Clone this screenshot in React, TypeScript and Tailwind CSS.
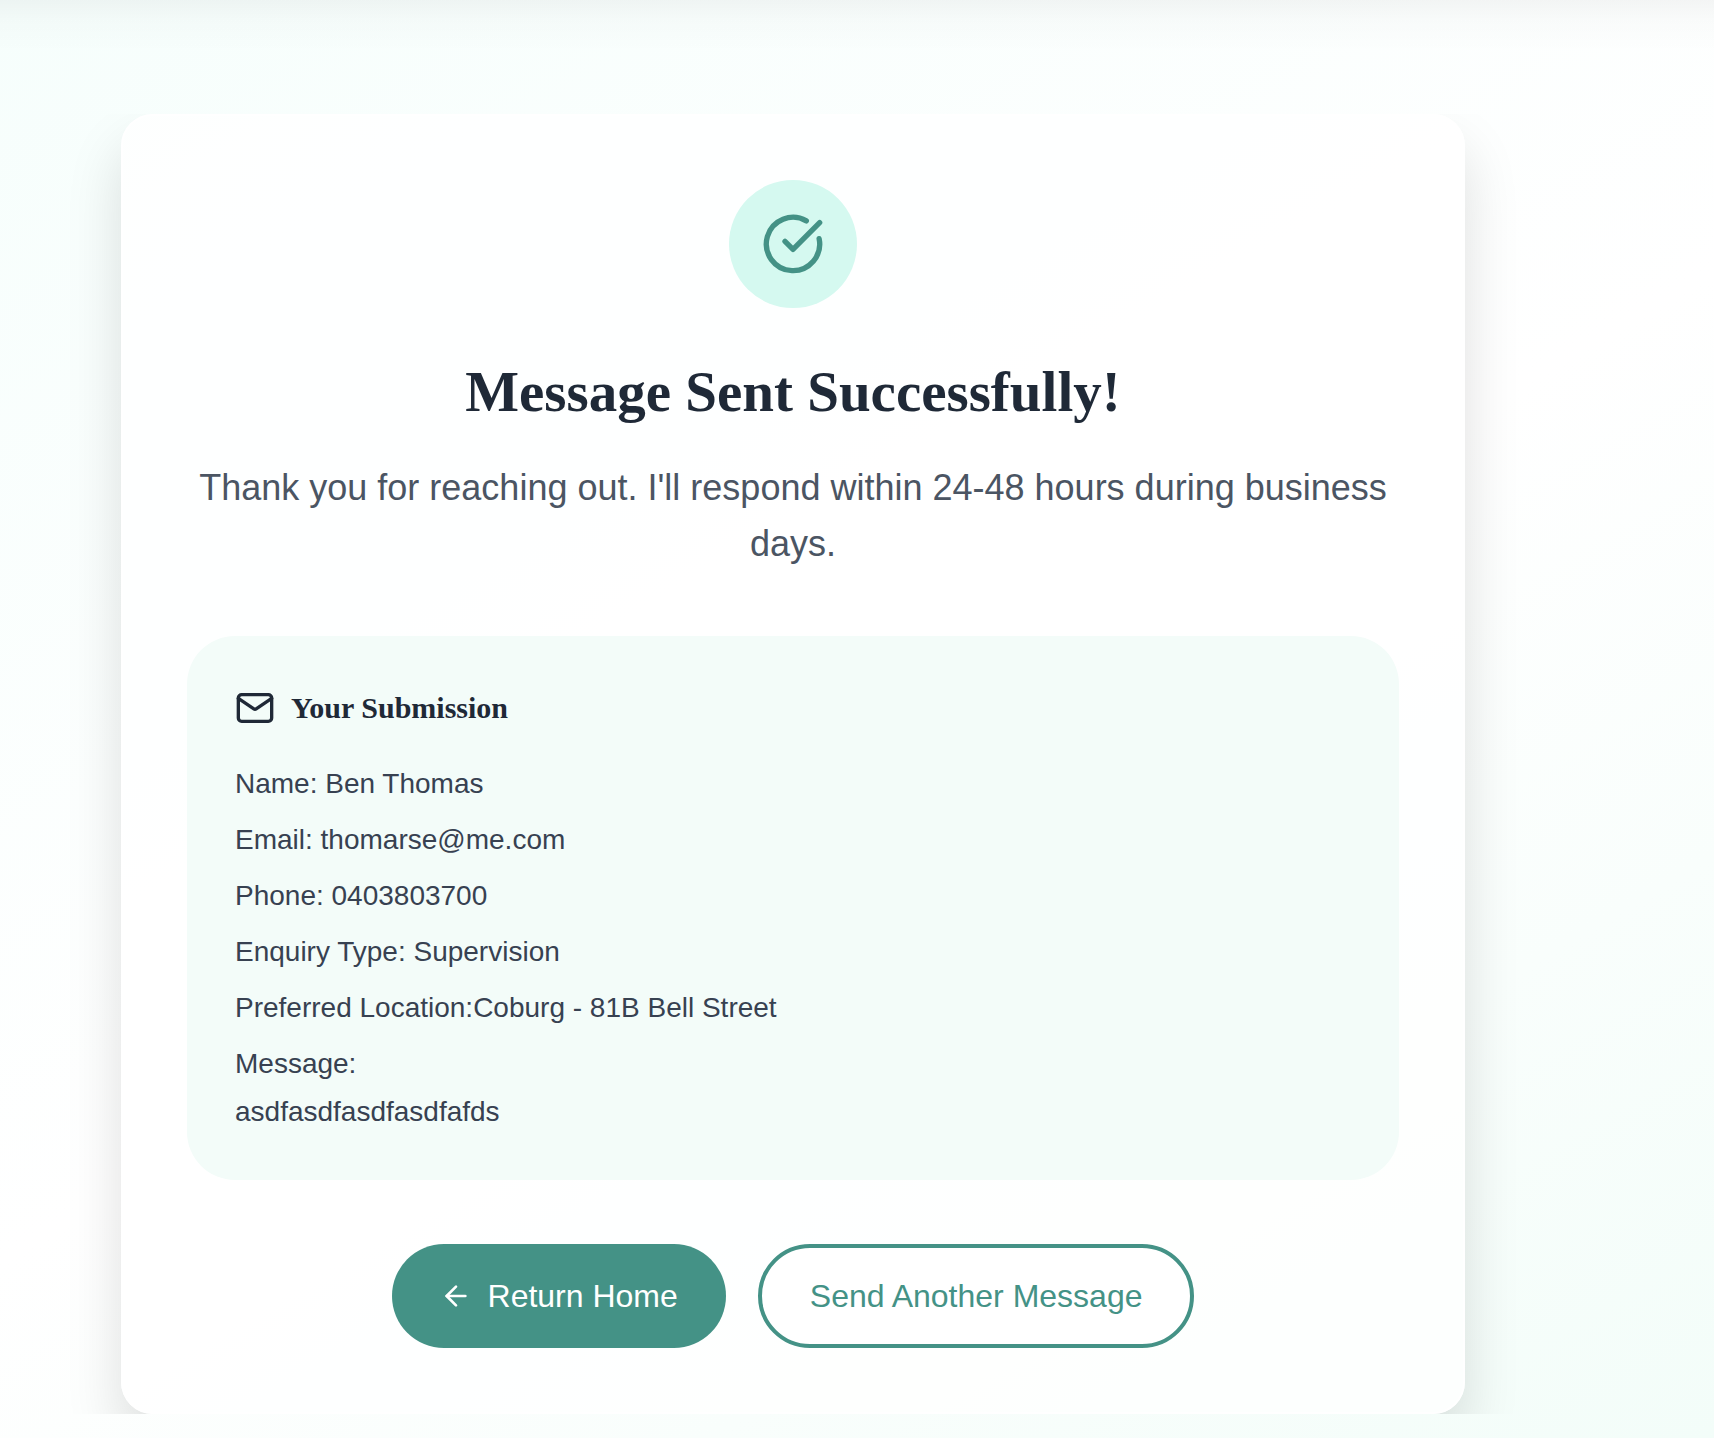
import { ArrowLeft, CircleCheckBig } from "lucide-react";

const details = [
  "Name: Ben Thomas",
  "Email: thomarse@me.com",
  "Phone: 0403803700",
  "Enquiry Type: Supervision",
  "Preferred Location:Coburg - 81B Bell Street",
];

function MailIcon() {
  return (
    <svg
      className="size-10"
      viewBox="0 0 24 24"
      fill="none"
      stroke="currentColor"
      strokeWidth="2"
      strokeLinecap="round"
      strokeLinejoin="round"
      aria-hidden="true"
    >
      <rect x="2" y="4" width="20" height="16" rx="2" />
      <path d="m22 6.2-9.3 6.3a1.2 1.2 0 0 1-1.4 0L2 6.2" />
    </svg>
  );
}

export default function App() {
  return (
    <main className="min-h-screen bg-[linear-gradient(150deg,#f6fefc_0%,#ffffff_52%,#f3fdf9_100%)] font-['Liberation_Sans',Arial,sans-serif]">
      <div className="h-[114px] bg-[linear-gradient(to_bottom,rgba(0,0,0,0.04),rgba(0,0,0,0.016)_20px,rgba(0,0,0,0)_52px)]" />
      <div className="overflow-hidden pr-[249px] pl-[121px]">
        <section className="rounded-[32px] border-2 border-white bg-white/80 p-16 text-center shadow-[0_32px_56px_0_rgba(0,0,0,0.13)]">
          <div className="mx-auto mb-12 flex size-32 items-center justify-center rounded-full bg-[#d5f9f0] text-[#449286]">
            <CircleCheckBig className="size-16" />
          </div>
          <h1 className="mb-8 font-['Liberation_Serif','Times_New_Roman',serif] text-[57px] leading-[72px] font-bold text-[#1f2937]">
            Message Sent Successfully!
          </h1>
          <p className="mb-16 text-4xl leading-[56px] text-[#4b5563]">
            Thank you for reaching out. I'll respond within 24-48 hours during business days.
          </p>
          <div className="mb-16 rounded-[48px] bg-[#f3fcf9] p-12 text-left">
            <h2 className="mb-8 flex items-center gap-4 font-['Liberation_Serif','Times_New_Roman',serif] text-3xl leading-[48px] font-bold text-[#1f2937]">
              <MailIcon />
              Your Submission
            </h2>
            <div className="flex flex-col gap-4 text-[28px] leading-10 text-[#374151]">
              {details.map((line) => (
                <p key={line}>{line}</p>
              ))}
              <div>
                <p className="mb-2">Message:</p>
                <p>asdfasdfasdfasdfafds</p>
              </div>
            </div>
          </div>
          <div className="flex justify-center gap-8 text-[32px] leading-[48px]">
            <a href="#" className="flex items-center gap-4 rounded-[52px] bg-[#449286] px-12 text-white">
              <ArrowLeft className="size-8" />
              Return Home
            </a>
            <button type="button" className="rounded-[52px] border-4 border-[#449286] bg-white px-12 py-6 text-[#449286]">
              Send Another Message
            </button>
          </div>
        </section>
      </div>
    </main>
  );
}
